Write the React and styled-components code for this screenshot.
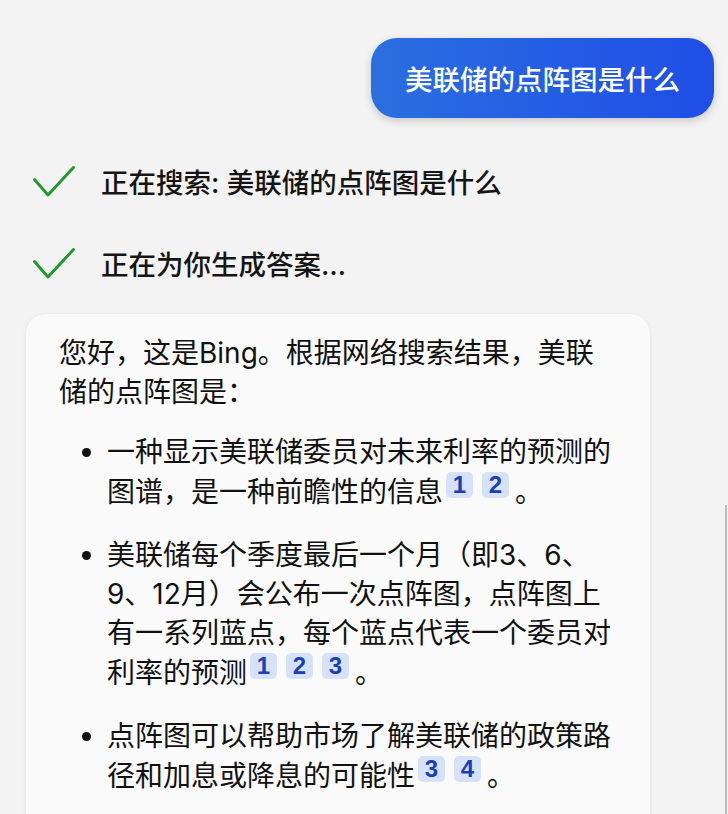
import React from "react";
import styled, { createGlobalStyle } from "styled-components";

const GlobalStyle = createGlobalStyle`
  html, body {
    margin: 0;
    padding: 0;
    background: #f3f3f3;
  }
  body {
    font-family: "Inter", "Noto Sans CJK SC", sans-serif;
    color: #111;
    overflow: hidden;
  }
`;

const Page = styled.div`
  height: 814px;
  box-sizing: border-box;
  padding-top: 38px;
  display: flex;
  flex-direction: column;
`;

const UserRow = styled.div`
  display: flex;
  justify-content: flex-end;
  padding-right: 14px;
`;

const UserBubble = styled.div`
  height: 80px;
  padding: 0 34px;
  display: flex;
  align-items: center;
  border-radius: 26px;
  background: linear-gradient(90deg, #2a6fdf 0%, #1f4ee7 100%);
  box-shadow: 0 3px 8px rgba(0, 0, 0, 0.18);
  color: #fff;
  font-size: 27.5px;
  font-weight: 500;
`;

const StatusList = styled.div`
  display: flex;
  flex-direction: column;
  gap: 52px;
  margin-top: 48px;
  padding-left: 33px;
`;

const StatusRow = styled.div`
  display: flex;
  align-items: center;
  gap: 26px;
  height: 30px;
  font-size: 27.5px;
  font-weight: 500;
  color: #151515;
`;

const Check = () => (
  <svg width="42" height="31" viewBox="0 0 42 31" fill="none">
    <path
      d="M1.5 13.5 L15 29 L40.5 1.5"
      stroke="#1d9a2b"
      strokeWidth="2.9"
      strokeLinecap="round"
      strokeLinejoin="round"
    />
  </svg>
);

const Card = styled.div`
  margin: 36px 0 0 26px;
  width: 624px;
  flex: 1;
  box-sizing: border-box;
  padding: 20px 36px 0 33px;
  background: #fafafa;
  border-radius: 20px 20px 0 0;
  box-shadow: 0 1px 4px rgba(0, 0, 0, 0.08);
  font-size: 28px;
  line-height: 39px;
  color: #111;
`;

const Para = styled.p`
  margin: 0;
`;

const List = styled.ul`
  margin: 21px 0 0;
  padding-left: 48px;
`;

const Item = styled.li`
  margin-bottom: 24px;
`;

const Cite = styled.span`
  display: inline-block;
  width: 27px;
  height: 26px;
  margin-left: ${(p) => (p.$first ? "3px" : "0")};
  margin-right: 9px;
  border-radius: 5px;
  background: #d6e2fa;
  color: #1a3fb6;
  font-family: "Liberation Sans", "Inter", sans-serif;
  font-weight: 700;
  font-size: 24px;
  line-height: 26px;
  text-align: center;
  vertical-align: 9px;
`;

const Period = styled.span`
  margin-left: -3px;
`;

const Scrollbar = styled.div`
  position: absolute;
  right: 1px;
  top: 505px;
  bottom: 0;
  width: 2px;
  background: #bdbdbd;
`;

const items = [
  { text: "一种显示美联储委员对未来利率的预测的图谱，是一种前瞻性的信息", cites: [1, 2] },
  {
    text: "美联储每个季度最后一个月（即3、6、9、12月）会公布一次点阵图，点阵图上有一系列蓝点，每个蓝点代表一个委员对利率的预测",
    cites: [1, 2, 3],
  },
  { text: "点阵图可以帮助市场了解美联储的政策路径和加息或降息的可能性", cites: [3, 4] },
];

export default function App() {
  return (
    <>
      <GlobalStyle />
      <Page>
        <UserRow>
          <UserBubble>美联储的点阵图是什么</UserBubble>
        </UserRow>
        <StatusList>
          <StatusRow>
            <Check />
            <span>正在搜索: 美联储的点阵图是什么</span>
          </StatusRow>
          <StatusRow>
            <Check />
            <span>正在为你生成答案…</span>
          </StatusRow>
        </StatusList>
        <Card>
          <Para>您好，这是Bing。根据网络搜索结果，美联储的点阵图是：</Para>
          <List>
            {items.map((it, i) => (
              <Item key={i}>
                {it.text}
                {it.cites.map((c, j) => (
                  <Cite key={j} $first={j === 0}>
                    {c}
                  </Cite>
                ))}
                <Period>。</Period>
              </Item>
            ))}
          </List>
        </Card>
      </Page>
      <Scrollbar />
    </>
  );
}
